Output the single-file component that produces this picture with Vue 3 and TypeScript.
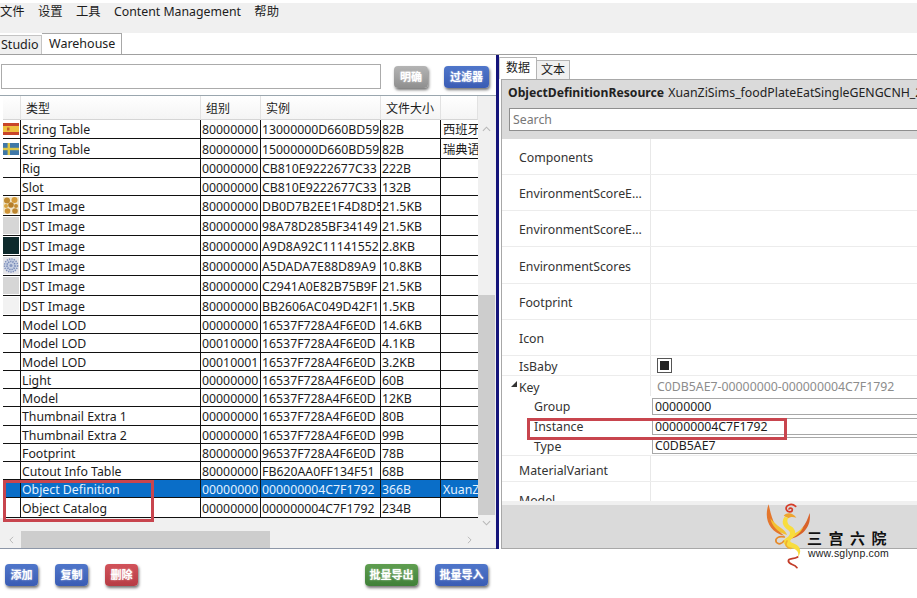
<template>
  <div class="app">
    <div class="menu">
      <span v-for="m in menus" :key="m">{{ m }}</span>
    </div>
    <div class="tabs">
      <span class="tab">Studio</span>
      <span class="tab active">Warehouse</span>
    </div>
    <div class="main">
      <div class="left">
        <div class="filter-row">
          <input class="filter" type="text" />
          <button class="btn gray clear">明确</button>
          <button class="btn blue filter-btn">过滤器</button>
        </div>
        <div class="grid-wrap">
          <div class="grid">
            <table>
              <colgroup>
                <col style="width: 18px" />
                <col style="width: 180px" />
                <col style="width: 60px" />
                <col style="width: 120px" />
                <col style="width: 60px" />
                <col style="width: 37px" />
              </colgroup>
              <thead>
                <tr>
                  <th></th>
                  <th>类型</th>
                  <th>组别</th>
                  <th>实例</th>
                  <th>文件大小</th>
                  <th></th>
                </tr>
              </thead>
              <tbody>
                <tr v-for="r in rows" :key="r.inst + r.type + r.group" :class="{ sel: r.sel }" :style="{ height: r.h + 'px' }">
                  <td class="ic">
                    <svg v-if="r.icon === 'es'" viewBox="0 0 16 12" class="thumb flag"><rect width="16" height="12" fill="#c9452a" /><rect y="3" width="16" height="6" fill="#eec040" /><rect x="4" y="4.5" width="2.5" height="3" fill="#c8602a" /></svg>
                    <svg v-else-if="r.icon === 'se'" viewBox="0 0 16 12" class="thumb flag"><rect width="16" height="12" fill="#3f78a8" /><rect y="4.8" width="16" height="2.4" fill="#dcc648" /><rect x="4.6" width="2.4" height="12" fill="#dcc648" /></svg>
                    <svg v-else-if="r.icon === 'gold'" viewBox="0 0 16 17" class="thumb">
                      <rect width="16" height="17" fill="#efe4c8" />
                      <circle cx="4" cy="3.5" r="3" fill="#c08a30" /><circle cx="11.5" cy="3" r="3" fill="#d49a38" />
                      <circle cx="8" cy="8" r="2.8" fill="#b57e28" /><circle cx="3" cy="9" r="2" fill="#d8a440" /><circle cx="13" cy="9" r="2" fill="#c48c30" />
                      <circle cx="4.5" cy="14" r="2.8" fill="#d09436" /><circle cx="12" cy="14" r="2.8" fill="#bd8630" />
                    </svg>
                    <span v-else-if="r.icon === 'gray'" class="thumb fill gray-t"></span>
                    <span v-else-if="r.icon === 'dark'" class="thumb fill dark-t"></span>
                    <span v-else-if="r.icon === 'pale'" class="thumb fill pale-t"></span>
                    <svg v-else-if="r.icon === 'blue'" viewBox="0 0 16 17" class="thumb">
                      <rect width="16" height="17" fill="#e4e4e8" />
                      <circle cx="8" cy="8.5" r="6.6" fill="#c6cfe2" stroke="#7e90bc" stroke-width="1.4" stroke-dasharray="1.4 1" />
                      <circle cx="8" cy="8.5" r="4" fill="none" stroke="#7084b4" stroke-width="1.6" stroke-dasharray="1.2 1" />
                      <circle cx="8" cy="8.5" r="1.5" fill="#8496c0" />
                    </svg>
                  </td>
                  <td>{{ r.type }}</td>
                  <td>{{ r.group }}</td>
                  <td>{{ r.inst }}</td>
                  <td>{{ r.size }}</td>
                  <td>{{ r.extra }}</td>
                </tr>
              </tbody>
            </table>
            <div class="vbar">
              <svg class="arrow up" viewBox="0 0 10 6"><path d="M1 5 L5 1 L9 5" /></svg>
              <div class="vthumb"></div>
              <svg class="arrow down" viewBox="0 0 10 6"><path d="M1 1 L5 5 L9 1" /></svg>
            </div>
          </div>
          <div class="hbar">
            <svg class="arrow side" viewBox="0 0 6 10"><path d="M5 1 L1 5 L5 9" /></svg>
            <div class="hthumb"></div>
            <svg class="arrow side end" viewBox="0 0 6 10"><path d="M1 1 L5 5 L1 9" /></svg>
          </div>
        </div>
        <div class="red-box list-mark"></div>
      </div>
      <div class="right">
        <div class="sub-tabs">
          <span class="sub-tab active">数据</span>
          <span class="sub-tab">文本</span>
        </div>
        <div class="panel">
          <div class="panel-head">
            <div class="title"><b>ObjectDefinitionResource</b> <span>XuanZiSims_foodPlateEatSingleGENGCNH_2</span></div>
            <div class="search">Search</div>
          </div>
          <div class="props">
            <div v-for="p in props" :key="p.name + p.h" class="prop" :class="{ nested: p.nested, noline: p.noline }" :style="{ height: p.h + 'px' }">
              <div class="prop-name">
                <i v-if="p.name === 'Key'" class="caret"></i>
                {{ p.name }}
              </div>
              <div class="prop-val">
                <span v-if="p.check" class="check"><i></i></span>
                <span v-else-if="p.muted" class="muted">{{ p.val }}</span>
                <span v-else-if="p.val" class="field">{{ p.val }}</span>
              </div>
            </div>
          </div>
          <div class="panel-foot"></div>
        </div>
        <div class="red-box inst-mark"></div>
      </div>
    </div>
    <div class="footer">
      <div class="foot-l">
        <button class="btn blue small">添加</button>
        <button class="btn blue small">复制</button>
        <button class="btn red small">删除</button>
      </div>
      <div class="foot-r">
        <button class="btn green wide">批量导出</button>
        <button class="btn blue wide">批量导入</button>
      </div>
    </div>
    <div class="mark">
      <svg viewBox="0 0 180 240" class="phoenix">
        <!-- left wing -->
        <path d="M41 28 C26 66 40 110 88 122 C62 104 50 72 41 28 Z" fill="#e4762c" />
        <path d="M46 70 C50 92 66 112 96 120 C92 104 74 98 62 86 C56 80 50 76 46 70 Z" fill="#f4c233" />
        <!-- right wing -->
        <path d="M164 54 C170 92 146 122 106 132 C136 112 154 88 164 54 Z" fill="#d9622a" />
        <path d="M146 94 C136 108 122 116 104 120 L108 130 C124 124 138 112 146 94 Z" fill="#f6cf3a" />
        <!-- head and neck -->
        <path d="M122 34 C108 22 90 32 94 44 C98 54 112 52 112 44 C112 38 104 38 102 42" fill="none" stroke="#d63c28" stroke-width="5" stroke-linecap="round" />
        <path d="M86 62 C98 50 114 54 124 68 C112 64 104 66 100 70 Z" fill="#eea42e" />
        <!-- body -->
        <path d="M88 66 C76 84 88 98 100 106 C112 116 100 126 90 132 C76 142 94 156 112 160 C126 164 134 174 128 186 C142 172 136 152 118 146 C104 142 102 138 112 130 C126 118 122 102 108 94 C98 88 94 78 100 68 Z" fill="#f8dd3e" />
        <!-- lower curl -->
        <path d="M88 126 C72 122 58 130 64 142 C70 150 82 146 86 138" fill="none" stroke="#e68a2a" stroke-width="5" stroke-linecap="round" />
        <path d="M96 138 C88 150 96 160 108 160" fill="none" stroke="#f0b030" stroke-width="5" stroke-linecap="round" />
        <!-- tail -->
        <path d="M128 186 C116 194 100 188 100 198 C102 210 118 206 126 218" fill="none" stroke="#c23c28" stroke-width="5" stroke-linecap="round" />
      </svg>
      <div class="mark-cn">三宫六院</div>
      <div class="mark-url">www.sglynp.com</div>
    </div>
  </div>
</template>

<script setup lang="ts">
interface Row {
  icon?: string
  type: string
  group: string
  inst: string
  size: string
  extra?: string
  h: number
  sel?: boolean
}

const menus = ['文件', '设置', '工具', 'Content Management', '帮助']
const lod = '16537F728A4F6E0D'

const rows: Row[] = [
  { icon: 'es', type: 'String Table', group: '80000000', inst: '13000000D660BD59', size: '82B', extra: '西班牙', h: 19 },
  { icon: 'se', type: 'String Table', group: '80000000', inst: '15000000D660BD59', size: '82B', extra: '瑞典语', h: 20 },
  { type: 'Rig', group: '00000000', inst: 'CB810E9222677C33', size: '222B', h: 19 },
  { type: 'Slot', group: '00000000', inst: 'CB810E9222677C33', size: '132B', h: 18 },
  { icon: 'gold', type: 'DST Image', group: '80000000', inst: 'DB0D7B2EE1F4D8D5', size: '21.5KB', h: 20 },
  { icon: 'gray', type: 'DST Image', group: '80000000', inst: '98A78D285BF34149', size: '21.5KB', h: 20 },
  { icon: 'dark', type: 'DST Image', group: '80000000', inst: 'A9D8A92C11141552', size: '2.8KB', h: 20 },
  { icon: 'blue', type: 'DST Image', group: '80000000', inst: 'A5DADA7E88D89A9', size: '10.8KB', h: 20 },
  { icon: 'gray', type: 'DST Image', group: '80000000', inst: 'C2941A0E82B75B9F', size: '21.5KB', h: 20 },
  { icon: 'pale', type: 'DST Image', group: '80000000', inst: 'BB2606AC049D42F1', size: '1.5KB', h: 20 },
  { type: 'Model LOD', group: '00000000', inst: lod, size: '14.6KB', h: 18 },
  { type: 'Model LOD', group: '00010000', inst: lod, size: '4.1KB', h: 19 },
  { type: 'Model LOD', group: '00010001', inst: lod, size: '3.2KB', h: 18 },
  { type: 'Light', group: '00000000', inst: lod, size: '60B', h: 18 },
  { type: 'Model', group: '00000000', inst: lod, size: '12KB', h: 18 },
  { type: 'Thumbnail Extra 1', group: '00000000', inst: lod, size: '80B', h: 19 },
  { type: 'Thumbnail Extra 2', group: '00000000', inst: lod, size: '99B', h: 18 },
  { type: 'Footprint', group: '80000000', inst: '96537F728A4F6E0D', size: '78B', h: 18 },
  { type: 'Cutout Info Table', group: '80000000', inst: 'FB620AA0FF134F51', size: '68B', h: 18 },
  { type: 'Object Definition', group: '00000000', inst: '000000004C7F1792', size: '366B', extra: 'XuanZ', h: 18, sel: true },
  { type: 'Object Catalog', group: '00000000', inst: '000000004C7F1792', size: '234B', h: 20 }
]

interface Prop {
  name: string
  h: number
  val?: string
  nested?: boolean
  muted?: boolean
  check?: boolean
  noline?: boolean
}

const props: Prop[] = [
  { name: 'Components', h: 36 },
  { name: 'EnvironmentScoreE...', h: 36 },
  { name: 'EnvironmentScoreE...', h: 36 },
  { name: 'EnvironmentScores', h: 37 },
  { name: 'Footprint', h: 36 },
  { name: 'Icon', h: 36 },
  { name: 'IsBaby', h: 20, check: true },
  { name: 'Key', h: 20, val: 'C0DB5AE7-00000000-000000004C7F1792', muted: true, noline: true },
  { name: 'Group', h: 20, val: '00000000', nested: true, noline: true },
  { name: 'Instance', h: 20, val: '000000004C7F1792', nested: true, noline: true },
  { name: 'Type', h: 20, val: 'C0DB5AE7', nested: true },
  { name: 'MaterialVariant', h: 26 },
  { name: 'Model', h: 36 }
]
</script>

<style>
html,
body {
  margin: 0;
  background: #fff;
}
</style>

<style scoped>
.app {
  position: relative;
  width: 917px;
  height: 598px;
  overflow: hidden;
  padding-top: 3px;
  box-sizing: border-box;
  font-family: "Noto Sans", "Noto Sans CJK SC", sans-serif;
  font-size: 12.3px;
  color: #1c1c1c;
  background: #fff;
}
.menu {
  display: flex;
  gap: 13.4px;
  height: 30px;
  background: #f0f0f0;
  line-height: 18px;
}
.tabs {
  display: flex;
  align-items: flex-end;
  height: 22px;
  border-bottom: 1px solid #a0a0a0;
  box-sizing: border-box;
  font-size: 12.5px;
}
.tab {
  height: 19px;
  width: 42px;
  background: #f0f0f0;
  border: 1px solid #c4c4c4;
  border-bottom: 0;
  border-left: 0;
  box-sizing: border-box;
  padding-left: 1px;
  line-height: 17px;
}
.tab.active {
  height: 21px;
  width: 80px;
  background: #fff;
  border-color: #a8a8a8;
  border-left-width: 0;
  padding-left: 7px;
  line-height: 19px;
}
.main {
  display: flex;
  height: 494px;
}
.left {
  position: relative;
  width: 496px;
  flex: none;
  box-sizing: border-box;
}
.filter-row {
  display: flex;
  align-items: center;
  height: 41px;
  padding: 0 0 0 1px;
  border-bottom: 1px solid #9aa6ae;
  box-sizing: border-box;
}
.filter {
  width: 380px;
  height: 25px;
  box-sizing: border-box;
  border: 1px solid #ababab;
  background: #fff;
  margin-top: 3px;
}
.btn {
  border: 0;
  padding: 0 0 2px;
  height: 22px;
  border-radius: 4px;
  color: #fff;
  font-family: "Noto Sans CJK SC", sans-serif;
  font-size: 11px;
  font-weight: 700;
  line-height: 20px;
  box-shadow: 1px 2px 3px rgba(0, 0, 0, 0.55);
  text-shadow: 0 0 2px rgba(255, 255, 255, 0.7);
}
.blue {
  background: linear-gradient(#4f76ca, #3a5cb4);
}
.gray {
  background: linear-gradient(#b4b4b4, #8f8f8f);
}
.red {
  background: linear-gradient(#d2525a, #b63c44);
}
.green {
  background: linear-gradient(#5f9e50, #3f8038);
}
.clear {
  width: 34px;
  margin: 3px 0 0 13px;
}
.filter-btn {
  width: 45px;
  margin: 3px 0 0 16px;
}
.grid-wrap {
  height: 453px;
  background: #f0f0f0;
  border-bottom: 1px solid #8d97a8;
  box-sizing: border-box;
}
.grid {
  display: flex;
  height: 435px;
  padding-left: 3px;
}
table {
  width: 475px;
  table-layout: fixed;
  border-collapse: separate;
  border-spacing: 0;
  align-self: flex-start;
  background: #fff;
  box-shadow: -3px 0 0 #fff;
}
th {
  height: 24px;
  padding: 1px 0 0 5px;
  box-sizing: border-box;
  background: linear-gradient(#fff, #f4f4f4);
  border-right: 1px solid #e2e2e2;
  border-bottom: 1px solid #d5d5d5;
  font-size: 12px;
  font-weight: 400;
  text-align: left;
  white-space: nowrap;
  overflow: hidden;
}
td {
  box-sizing: border-box;
  padding: 2px 0 0 1px;
  border-right: 1px solid #111;
  border-bottom: 1px solid #111;
  white-space: nowrap;
  overflow: hidden;
  line-height: 14px;
}
td:last-child {
  border-right: 0;
  padding-left: 2px;
}
.sel td {
  background: #0a6ec8;
  color: #e4f2ff;
}
td.ic {
  padding: 0;
}
.thumb {
  display: block;
  width: 16px;
  height: 17px;
  filter: blur(0.4px);
}
.flag {
  height: 12px;
}
.fill {
  background: #d4d4d4;
}
.gray-t {
  background: #d6d6d6;
}
.dark-t {
  background: #0e2a2c;
}
.pale-t {
  background: #f2f2f2;
}
.vbar {
  position: relative;
  width: 18px;
  flex: none;
  background: #f0f0f0;
}
.vthumb {
  position: absolute;
  left: 0;
  right: 1px;
  top: 199px;
  height: 220px;
  background: #cdcdcd;
}
.arrow {
  fill: none;
  stroke: #b8b8b8;
  stroke-width: 1.2;
}
.arrow.up,
.arrow.down {
  position: absolute;
  left: 4px;
  width: 9px;
  height: 6px;
}
.arrow.up {
  top: 30px;
}
.arrow.down {
  top: 424px;
}
.hbar {
  display: flex;
  align-items: center;
  height: 17px;
  position: relative;
}
.arrow.side {
  position: absolute;
  left: 9px;
  top: 5px;
  width: 5px;
  height: 8px;
}
.arrow.side.end {
  left: 467px;
}
.hthumb {
  position: absolute;
  left: 21px;
  top: 0;
  width: 249px;
  height: 17px;
  background: #cdcdcd;
}
.red-box {
  position: absolute;
  border: 3px solid #c8454e;
  box-sizing: border-box;
  pointer-events: none;
}
.list-mark {
  left: 3px;
  top: 425px;
  width: 151px;
  height: 42px;
}
.right {
  position: relative;
  flex: 1;
  min-width: 0;
  padding-top: 2px;
  box-sizing: border-box;
  border-left: 3px solid #14147a;
}
.sub-tabs {
  display: flex;
  align-items: flex-end;
  height: 22px;
  font-size: 12px;
}
.sub-tab {
  height: 19px;
  width: 33px;
  text-align: center;
  background: #f0f0f0;
  border: 1px solid #b4b4b4;
  border-left: 0;
  border-bottom: 0;
  box-sizing: border-box;
  line-height: 18px;
}
.sub-tab.active {
  height: 22px;
  width: 38px;
  background: #fff;
  line-height: 20px;
  border-left: 1px solid #d0d0d0;
}
.panel {
  display: flex;
  flex-direction: column;
  height: 470px;
  margin-left: 2px;
  border: 1px solid #a8a8a8;
  border-right: 0;
  box-sizing: border-box;
  overflow: hidden;
}
.panel-head {
  height: 59px;
  flex: none;
  background: #dadada;
  padding-left: 6px;
  box-sizing: border-box;
}
.title {
  height: 28px;
  line-height: 25px;
  white-space: nowrap;
  color: #222;
}
.title b {
  font-size: 12.2px;
}
.title span {
  font-size: 12.3px;
  margin-left: 1px;
}
.search {
  height: 23px;
  margin-left: 1px;
  background: #fff;
  border: 1px solid #8e8e8e;
  border-right: 0;
  box-sizing: border-box;
  padding-left: 3px;
  line-height: 22px;
  color: #777;
}
.props {
  height: 366px;
  flex: none;
  overflow: hidden;
  background: #fff;
  border-bottom: 4px solid #f0f0f0;
  box-sizing: border-box;
}
.prop {
  display: flex;
  box-sizing: border-box;
  border-bottom: 1px solid #ececec;
  overflow: hidden;
}
.prop.noline {
  border-bottom: 0;
}
.prop-name {
  position: relative;
  width: 149px;
  flex: none;
  padding: 2px 0 0 17px;
  box-sizing: border-box;
  border-right: 1px solid #e8e8e8;
  display: flex;
  align-items: center;
  white-space: nowrap;
  color: #333;
}
.prop.nested .prop-name {
  padding: 0 0 0 32px;
  border-right-color: transparent;
}
.prop.nested:nth-child(11) .prop-name {
  padding-top: 2px;
}
.prop:nth-child(12) .prop-name {
  padding-top: 4px;
}
.caret {
  position: absolute;
  left: 9px;
  top: 5px;
  width: 0;
  height: 0;
  border-style: solid;
  border-width: 0 0 6px 6px;
  border-color: transparent transparent #333 transparent;
}
.prop-val {
  flex: 1;
  display: flex;
  align-items: center;
  min-width: 0;
  padding-left: 1px;
}
.muted {
  padding-left: 5px;
  color: #8c8c8c;
  white-space: nowrap;
}
.field {
  display: block;
  width: 100%;
  height: 17px;
  line-height: 15px;
  padding-left: 2px;
  border: 1px solid #a8a8a8;
  border-right: 0;
  box-sizing: border-box;
}
.check {
  display: flex;
  align-items: center;
  justify-content: center;
  margin-left: 5px;
  width: 13px;
  height: 13px;
  border: 1px solid #555;
}
.check i {
  width: 9px;
  height: 9px;
  background: #222;
}
.panel-foot {
  flex: 1;
  background: #dadada;
}
.inst-mark {
  left: 28px;
  top: 363px;
  width: 260px;
  height: 22px;
}
.footer {
  display: flex;
  width: 496px;
  height: 49px;
  padding: 15px 8px 0 5px;
  box-sizing: border-box;
  justify-content: space-between;
}
.foot-l {
  display: flex;
  gap: 17px;
}
.foot-r {
  display: flex;
  gap: 17px;
}
.small {
  width: 33px;
}
.wide {
  width: 53px;
}
.mark {
  position: absolute;
  left: 755px;
  top: 495px;
  width: 140px;
  height: 80px;
}
.phoenix {
  position: absolute;
  left: 0;
  top: 0;
  width: 60px;
  height: 80px;
}
.mark-cn {
  position: absolute;
  left: 52px;
  top: 33px;
  font-family: "Noto Sans CJK SC", sans-serif;
  font-size: 15px;
  font-weight: 700;
  letter-spacing: 6.5px;
  line-height: 20px;
  white-space: nowrap;
  color: #111;
}
.mark-url {
  position: absolute;
  left: 53px;
  top: 52px;
  font-family: "Liberation Sans", sans-serif;
  font-size: 10.5px;
  letter-spacing: 0.2px;
  line-height: 12px;
  white-space: nowrap;
  color: #222;
}
</style>
